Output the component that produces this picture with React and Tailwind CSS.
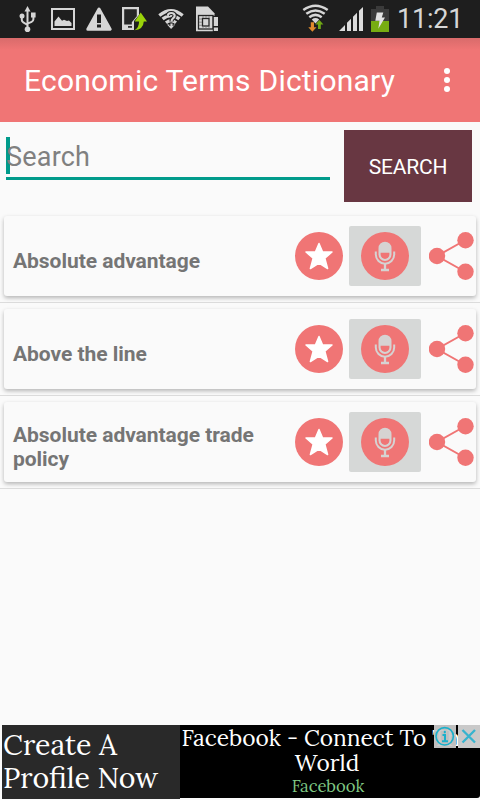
import { useState } from "react";

const TERMS = ["Absolute advantage", "Above the line", "Absolute advantage trade policy"];

/**
 * STATUS BAR
 * ==========
 * Notification icons on the left, signal, battery and clock on the right.
 */
function StatusBar() {
  return (
    <div className="flex h-[38px] items-center bg-[#1e1e1e] pl-[17px]">
      {/* USB */}
      <svg className="h-[38px] w-[22px]" viewBox="17 0 22 38" fill="#d6d6d6">
        <path d="M27.5 6l3 5.5h-6z" />
        <path d="M27.500 10v19M21.800 17v3q0 1.500 1.500 2.400l4.200 2.600M33.400 16v3.200q0 1.800-1.800 2.600l-4.100 1.800" fill="none" stroke="#d6d6d6" strokeWidth="2" />
        <circle cx="22" cy="16" r="2.500" />
        <rect x="31" y="12.500" width="4.600" height="5" />
        <circle cx="27.5" cy="29.3" r="2.8" />
      </svg>
      {/* Picture */}
      <svg className="ml-[11px] h-[38px] w-[26px]" viewBox="50 0 26 38">
        <rect x="52" y="9" width="22" height="20" fill="none" stroke="#d6d6d6" strokeWidth="2" />
        <path d="M54.500 26v-4.500l4-5 3.500 4.200 2-1 3 1.400 2-.6 2.500 2.500v3z" fill="#d6d6d6" />
      </svg>
      {/* Warning */}
      <svg className="ml-[9px] h-[38px] w-[28px]" viewBox="85 0 28 38">
        <path d="M99 9l11.2 20.3H87.8z" fill="#d6d6d6" stroke="#d6d6d6" strokeWidth="3" strokeLinejoin="round" />
        <path d="M97 14.500h4v8.500h-4zM97 24.500h4v3h-4z" fill="#1e1e1e" />
      </svg>
      {/* Phone update */}
      <svg className="ml-[8px] h-[38px] w-[27px]" viewBox="121 0 27 38">
        <path d="M122 7h17v8l-5 6v9h-12z" fill="#d6d6d6" />
        <path d="M124.2 9.2h12.6v7l-5 6v2.3h-7.6z" fill="#262626" />
        <rect x="128" y="26" width="4" height="1.8" fill="#333" />
        <path d="M140.7 12.5l6.3 9h-3.2q-.5 8-9.3 8.8 4.5-2.4 4.6-8.8h-4.4z" fill="#9ad30a" />
      </svg>
      {/* Unknown wifi */}
      <svg className="ml-[9px] h-[38px] w-[28px]" viewBox="157 0 28 38" fill="none">
        <path d="M159.300 15.500q11.700-9.500 23.400 0M162.600 19.100q8.400-7 16.800 0M166 22.700q5-4.200 10 0" stroke="#d6d6d6" strokeWidth="3.200" />
        <path d="M167 24.500h8.200l-4.100 4.500z" fill="#d6d6d6" />
        <path d="M167.700 15.800q.3-2.800 3.500-2.800 3.500 0 3.500 2.800 0 1.500-1.700 2.500-1.500 1-1.500 3.200M171.500 23.500v2.500" stroke="#1e1e1e" strokeWidth="4.200" />
        <path d="M167.700 15.800q.3-2.800 3.500-2.800 3.500 0 3.500 2.800 0 1.500-1.700 2.500-1.500 1-1.500 3.200M171.500 23.500v2.500" stroke="#d6d6d6" strokeWidth="2.200" />
      </svg>
      {/* SIM card */}
      <svg className="ml-[9px] h-[38px] w-[26px]" viewBox="194 0 26 38">
        <path d="M196 6.5h12l6.5 6.800v18H196z" fill="#d6d6d6" />
        <rect x="198.500" y="15.500" width="14.500" height="13.500" fill="#d6d6d6" stroke="#262626" strokeWidth="1.300" />
        <rect x="202.500" y="18.500" width="6.500" height="7.500" fill="#d6d6d6" stroke="#262626" strokeWidth="1.300" />
        <path d="M203 16v2M206 16v2M209 16v2M203 26.500v2M206 26.500v2M209 26.500v2M199 19h3M199 22.200h3M199 25.300h3" stroke="#777" strokeWidth=".8" />
        <rect x="212.800" y="15.800" width="6" height="16.200" fill="#1e1e1e" />
        <path d="M213.800 17h4.200v9h-4.200zM213.800 27.500h4.200v3.500h-4.200z" fill="#d6d6d6" />
      </svg>

      {/* Connected wifi with traffic arrows */}
      <svg className="ml-[81px] h-[38px] w-[29px]" viewBox="301 0 29 38" fill="none">
        <path d="M303.300 10.100q12.200-8.600 24.400 0M306.300 13.800q9.200-6.700 18.400 0M309.300 17.200q6.200-4.600 12.400 0" stroke="#d6d6d6" strokeWidth="2.500" />
        <path d="M311.800 19.500q3.700-2.800 7.400 0l-3.700 4z" fill="#d6d6d6" />
        <path d="M310.800 22.300h3.200v5h2.500l-4.100 4.500-4.100-4.500h2.500z" fill="#e08a2c" />
        <path d="M318 29v-4.500h-2.600l4-4.500 4 4.500h-2.600V29z" fill="#6fa814" />
      </svg>
      {/* Signal */}
      <svg className="ml-[8px] h-[38px] w-[26px]" viewBox="338 0 26 38" fill="#dcdcdc">
        <path d="M339 31l6-6v6zM347 22.700l4-4V31h-4zM353 16.700l4-4V31h-4zM359 10.700l4-3.700v24h-4z" />
      </svg>
      {/* Battery */}
      <svg className="ml-[7px] h-[38px] w-[18px]" viewBox="371 0 18 38">
        <path d="M371 9h5V6h8v3h5v23h-18z" fill="#3b3b3b" />
        <path d="M371 21h18v11h-18z" fill="#77ac12" />
        <path d="M376.800 12.500h6.500l-1.500 5h3.200l-6.700 11.300 1.200-8h-4.200z" fill="#e2e2e2" />
      </svg>
      <span className="ml-[8px] text-[27px] leading-[38px] tracking-[-0.2px] whitespace-nowrap text-[#d6d6d6]">11:21</span>
    </div>
  );
}

function StarIcon() {
  return (
    <svg className="size-12" viewBox="0 0 48 48">
      <circle cx="24" cy="24" r="24" fill="#f07575" />
      <path d="M24 11.500l3.600 8.500H37l-7.200 6.300 2.800 10.200L24 31l-8.600 5.500 2.800-10.200L11 20h9.400z" fill="#fff" stroke="#fff" strokeWidth="1.500" strokeLinejoin="round" />
    </svg>
  );
}

function MicIcon() {
  return (
    <svg className="size-12" viewBox="0 0 48 48" fill="none">
      <circle cx="24" cy="24" r="24" fill="#f07575" />
      <path d="M17.500 16.200a6.500 6.500 0 0 1 13 0v6.300a6.500 6.500 0 0 1-13 0z" fill="#d6d3d2" />
      <path d="M19.600 20.800h8.800v1.700a4.400 4.400 0 0 1-8.800 0z" fill="#f07575" />
      <path d="M14.800 19.500v3a9.200 9.200 0 0 0 18.400 0v-3" stroke="#d6d3d2" strokeWidth="2" />
      <path d="M24 31.500V38M20 38h8" stroke="#d6d3d2" strokeWidth="2.300" />
    </svg>
  );
}

function ShareIcon() {
  return (
    <svg className="h-12 w-[45px]" viewBox="0 0 45 48" fill="#f07575">
      <path d="M36.500 8L8 24l28.500 16" fill="none" stroke="#f07575" strokeWidth="2" />
      <circle cx="8" cy="24" r="8.200" />
      <circle cx="36.500" cy="8.200" r="8.200" />
      <circle cx="36.500" cy="39.800" r="8.200" />
    </svg>
  );
}

// One dictionary entry with favourite, speak and share actions
function TermRow({ term }) {
  return (
    <li className="border-b border-[#dcdcdc] px-1 py-1.5">
      <div className="flex h-20 items-center rounded-[3px] bg-[#fafafa] shadow-[0_2px_4px_rgba(0,0,0,0.28)]">
        <p className="ml-[9px] w-[282px] pt-2.5 pr-6 text-[21px] leading-6 font-bold tracking-[-0.04px] text-[#757575]">{term}</p>
        <button className="shrink-0" aria-label="Favourite">
          <StarIcon />
        </button>
        <button className="ml-1.5 flex h-[60px] w-[72px] shrink-0 items-center justify-center rounded-[2px] bg-[#d6d8d7]" aria-label="Speak">
          <MicIcon />
        </button>
        <button className="ml-2 shrink-0" aria-label="Share">
          <ShareIcon />
        </button>
      </div>
    </li>
  );
}

function AdBanner() {
  return (
    <div className="relative flex h-[75px] pl-0.5 font-['Lora','Liberation_Serif',serif] text-white">
      <div className="h-[74px] w-[178px] bg-[#292929] pt-[3px] pl-px text-[28.5px] leading-[33px] whitespace-nowrap">
        <p>Create A</p>
        <p>Profile Now</p>
      </div>
      <div className="h-[73px] flex-1 rounded-br-[3px] bg-black">
        <p className="pl-[1.5px] text-[22.7px] leading-[26px] whitespace-nowrap">Facebook - Connect To The</p>
        <p className="pr-1.5 text-center text-[22.7px] leading-6">World</p>
        <p className="pr-1 text-center text-[16.6px] leading-[23px] text-[#7fc783]">Facebook</p>
      </div>
      {/* Ad choices and close sit over the headline */}
      <div className="absolute top-0 right-0 flex gap-0.5">
        <svg className="h-[23px] w-[22px] bg-[#c9c9c9]/95" viewBox="0 0 22 23" fill="none" stroke="#19b0cb">
          <circle cx="10.700" cy="11.300" r="8.700" strokeWidth="1.600" />
          <path d="M8.500 10h2.500v6M8 16.300h6M10.800 5.800v2.400" strokeWidth="2" />
        </svg>
        <svg className="h-[23px] w-[22px] bg-[#c9c9c9]" viewBox="0 0 22 23" fill="none" stroke="#36b3ce" strokeWidth="2.300">
          <path d="M4.500 5l12.500 12.500M17 5L4.500 17.500" />
        </svg>
      </div>
    </div>
  );
}

function App() {
  const [query, setQuery] = useState("");

  return (
    <div className="flex h-[800px] w-[480px] flex-col overflow-hidden bg-[#fafafa] font-[Roboto,sans-serif]">
      <StatusBar />

      {/* Title bar */}
      <header className="flex h-[84px] items-center justify-between bg-[#f07575] bg-linear-to-b from-[#d96b6b] to-[#f07575] to-[12px] pr-[30px] pl-6 text-white">
        <h1 className="text-[30px] tracking-[0.22px] whitespace-nowrap">Economic Terms Dictionary</h1>
        <button className="flex flex-col gap-[3px]" aria-label="More options">
          <span className="size-1.5 rounded-full bg-white" />
          <span className="size-1.5 rounded-full bg-white" />
          <span className="size-1.5 rounded-full bg-white" />
        </button>
      </header>

      {/* Search form */}
      <div className="flex h-[88px] gap-3.5 px-2 pt-2 pl-1.5">
        <div className="relative h-[50px] w-[324px] border-b-[3px] border-[#009b8b]">
          <span className="absolute top-[7px] left-0 h-[37px] w-1 bg-[#009b8b]" />
          <input
            className="relative h-[54px] w-full bg-transparent text-[27px] tracking-[0.2px] text-[#333] outline-none placeholder:text-[#808080]"
            placeholder="Search"
            value={query}
            onChange={(e) => setQuery(e.target.value)}
          />
        </div>
        <button className="h-[72px] w-32 bg-[#683742] pt-[3px] text-[21px] tracking-[-0.2px] text-white">SEARCH</button>
      </div>

      <ul className="flex-1">
        {TERMS.map((term) => (
          <TermRow key={term} term={term} />
        ))}
      </ul>

      <AdBanner />
    </div>
  );
}

export default App;
